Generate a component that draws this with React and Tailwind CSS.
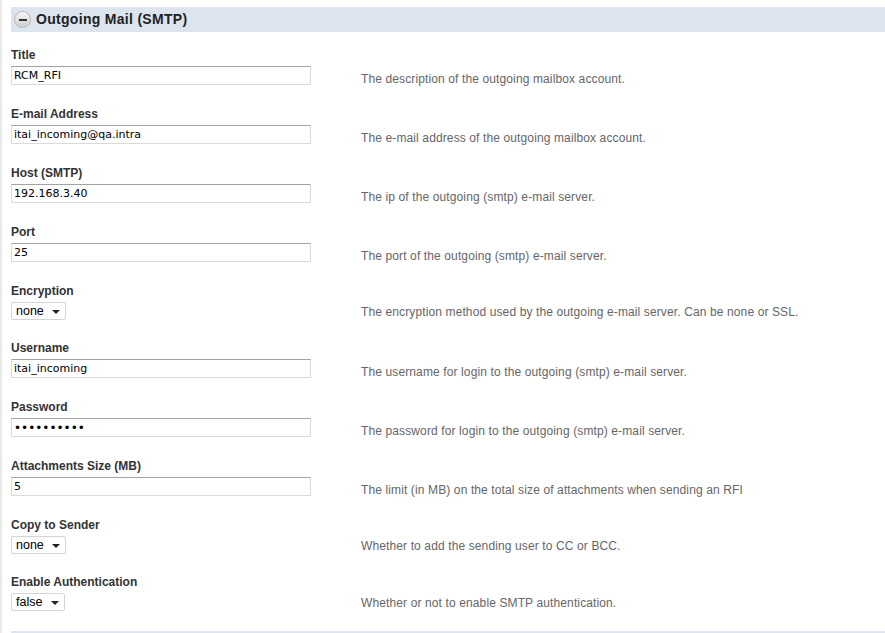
import React from "react";

const rows = [
    {label: "Title", type: "text", value: "RCM_RFI", desc: "The description of the outgoing mailbox account."},
    {label: "E-mail Address", type: "text", value: "itai_incoming@qa.intra", desc: "The e-mail address of the outgoing mailbox account."},
    {label: "Host (SMTP)", type: "text", value: "192.168.3.40", desc: "The ip of the outgoing (smtp) e-mail server."},
    {label: "Port", type: "text", value: "25", desc: "The port of the outgoing (smtp) e-mail server."},
    {label: "Encryption", type: "select", value: "none", options: ["none", "SSL"], w: "w-[55px]", desc: "The encryption method used by the outgoing e-mail server. Can be none or SSL."},
    {label: "Username", type: "text", value: "itai_incoming", desc: "The username for login to the outgoing (smtp) e-mail server."},
    {label: "Password", type: "password", value: "abcdefghij", desc: "The password for login to the outgoing (smtp) e-mail server."},
    {label: "Attachments Size (MB)", type: "text", value: "5", desc: "The limit (in MB) on the total size of attachments when sending an RFI"},
    {label: "Copy to Sender", type: "select", value: "none", options: ["none", "CC", "BCC"], w: "w-[55px]", desc: "Whether to add the sending user to CC or BCC."},
    {label: "Enable Authentication", type: "select", value: "false", options: ["false", "true"], w: "w-[54px]", desc: "Whether or not to enable SMTP authentication."},
];

function Field({row}) {
    if (row.type === "select") {
        return (
            <div className={"relative h-[18px] " + row.w}>
                <select
                    defaultValue={row.value}
                    className="block appearance-none w-full h-[18px] border border-[#d4d4d4] rounded-[2px] bg-white pl-[4px] py-0 text-[12.5px] leading-[16px] text-black outline-none"
                    style={{fontFamily: "'Liberation Sans', Arial, sans-serif"}}
                >
                    {row.options.map((o) => <option key={o}>{o}</option>)}
                </select>
                <span className="pointer-events-none absolute right-[6px] top-[8px] w-0 h-0 border-l-[4px] border-r-[4px] border-t-[4px] border-l-transparent border-r-transparent border-t-[#222]"></span>
            </div>
        );
    }
    const isPw = row.type === "password";
    return (
        <input
            type={row.type}
            defaultValue={row.value}
            className={"block w-[300px] h-[19px] border border-[#dadada] border-t-[#a3a3a3] bg-white px-[2px] text-black outline-none " + (isPw ? "text-[12px]" : "text-[11px]")}
            style={{fontFamily: "Tahoma, 'DejaVu Sans', 'Liberation Sans', sans-serif"}}
        />
    );
}

export default function App() {
    return (
        <div className="min-h-[633px] w-[885px] bg-white border-l-2 border-[#e8e8e8] pl-[9px] pt-[7px]"
             style={{fontFamily: "'Liberation Sans', Arial, sans-serif"}}>
            <div className="flex items-center h-[25px] bg-[#dce5ee] pl-[3px]">
                <div className="w-[17px] h-[17px] rounded-full border border-[#b4b4b4] bg-gradient-to-b from-[#f8f8f8] to-[#cfcfcf] flex items-center justify-center">
                    <div className="w-[8px] h-[2px] bg-[#333]"></div>
                </div>
                <div className="ml-[5px] text-[14px] tracking-[0.3px] font-bold text-[#222]">Outgoing Mail (SMTP)</div>
            </div>
            <div className="pt-[16px]">
                {rows.map((row) => (
                    <div key={row.label}
                         className={"flex items-end " + (row.type === "select" ? "h-[57px]" : "h-[59px]")}>
                        <div className={"w-[350px] " + (row.type === "select" ? "pb-[21px]" : "pb-[22px]")}>
                            <div className="text-[12px] leading-[14px] font-bold text-[#333]">{row.label}</div>
                            <div className="mt-[4px]">
                                <Field row={row}/>
                            </div>
                        </div>
                        <div className={"text-[12px] leading-[14px] tracking-[0.12px] text-[#666] " + (row.type === "select" ? "pb-[22px]" : "pb-[21px]")}>
                            {row.desc}
                        </div>
                    </div>
                ))}
            </div>
            <div className="h-[2px] bg-[#dce5ee] mt-[-1px]"></div>
        </div>
    );
}
